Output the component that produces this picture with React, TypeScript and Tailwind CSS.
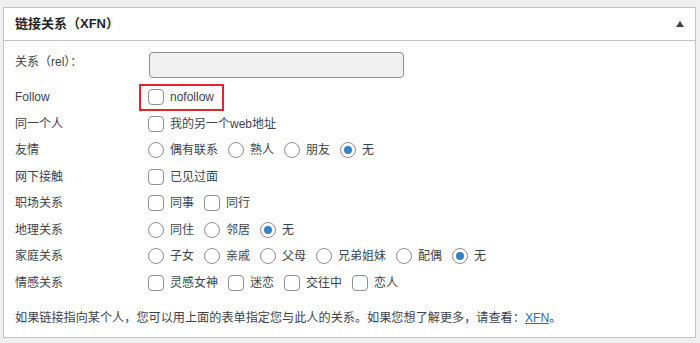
import React from "react";

type Row = {
  label: string;
  type: "checkbox" | "radio";
  items: string[];
  checked?: number;
};

const rows: Row[] = [
  { label: "同一个人", type: "checkbox", items: ["我的另一个web地址"] },
  { label: "友情", type: "radio", items: ["偶有联系", "熟人", "朋友", "无"], checked: 3 },
  { label: "网下接触", type: "checkbox", items: ["已见过面"] },
  { label: "职场关系", type: "checkbox", items: ["同事", "同行"] },
  { label: "地理关系", type: "radio", items: ["同住", "邻居", "无"], checked: 2 },
  { label: "家庭关系", type: "radio", items: ["子女", "亲戚", "父母", "兄弟姐妹", "配偶", "无"], checked: 5 },
  { label: "情感关系", type: "checkbox", items: ["灵感女神", "迷恋", "交往中", "恋人"] },
];

const Box = () => (
  <span className="w-4 h-4 shrink-0 rounded-[4px] border border-[#8c8f94] bg-white" />
);

const Radio = ({ on }: { on?: boolean }) => (
  <span className="w-4 h-4 shrink-0 rounded-full border border-[#8c8f94] bg-white flex items-center justify-center">
    {on && <span className="w-2 h-2 rounded-full bg-[#3582c4]" />}
  </span>
);

const Option = ({ type, text, on }: { type: Row["type"]; text: string; on?: boolean }) => (
  <label className="flex items-center mr-[10px]">
    {type === "checkbox" ? <Box /> : <Radio on={on} />}
    <span className="ml-[6px]">{text}</span>
  </label>
);

export default function App() {
  return (
    <div className="w-[700px] h-[343px] bg-[#f0f0f1] pt-[7px] pl-[3px] font-['Liberation_Sans','Noto_Sans_CJK_SC',sans-serif] text-[12px] text-[#3c434a]">
      <div className="w-[693px] h-[331px] bg-white border border-[#c3c4c7]">
        {/* header */}
        <div className="h-[33px] border-b border-[#c3c4c7] flex items-center justify-between pl-[11px] pr-[11px]">
          <h2 className="text-[13px] font-bold text-[#1d2327]">链接关系（XFN）</h2>
          <svg width="8" height="6" viewBox="0 0 8 6">
            <polygon points="4,0 8,6 0,6" fill="#3c434a" />
          </svg>
        </div>

        {/* body */}
        <div className="pl-[11px] pt-[11px]">
          <div className="flex items-start">
            <span className="w-[133px] leading-[20px]">关系（rel）：</span>
            <div className="ml-[1px] w-[255px] h-[26px] rounded-[4px] border border-[#8c8f94] bg-[#f0f0f1]" />
          </div>

          <div className="mt-[6px] h-[26.5px] flex items-center">
            <span className="w-[133px]">Follow</span>
            <div className="relative flex items-center">
              <Option type="checkbox" text="nofollow" />
              <span className="absolute -left-[9px] right-0 -top-[4px] -bottom-[5px] border-2 border-[#e3262d]" />
            </div>
          </div>

          {rows.map((row) => (
            <div key={row.label} className="h-[26.5px] flex items-center">
              <span className="w-[133px]">{row.label}</span>
              <div className="flex items-center">
                {row.items.map((t, i) => (
                  <Option key={t} type={row.type} text={t} on={row.checked === i} />
                ))}
              </div>
            </div>
          ))}

          <p className="mt-[13px] leading-[18px] text-[12.15px]">
            如果链接指向某个人，您可以用上面的表单指定您与此人的关系。如果您想了解更多，请查看：
            <a href="#" className="text-[#2271b1] underline">XFN</a>。
          </p>
        </div>
      </div>
    </div>
  );
}
